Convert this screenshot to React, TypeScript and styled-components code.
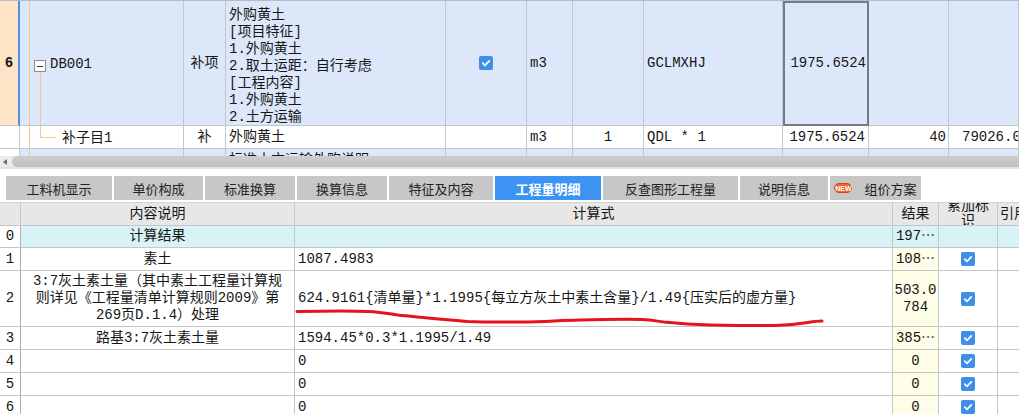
import React from "react";
import styled, { createGlobalStyle } from "styled-components";

const GlobalStyle = createGlobalStyle`
  *, *::before, *::after { box-sizing: border-box; }
  html, body { margin: 0; padding: 0; background: #fff; }
  body {
    font-family: "Liberation Mono", "Noto Sans CJK SC", monospace;
    font-size: 14px;
    color: #161616;
  }
`;

const ROW_BLUE = "#dce8fa";
const UP_LINE = "#c2c7cf";
const LOW_LINE = "#c6c6c6";
const TREE = "#f1c98e";

const Page = styled.div`
  position: relative;
  width: 1019px;
  height: 414px;
  overflow: hidden;
  display: flex;
  flex-direction: column;
`;

/* upper grid (list of items) */
const UpperGrid = styled.div`
  flex: none;
  display: grid;
  grid-template-columns: 20px 164px 42px 220px 81px 46px 71px 139px 86px 80px 70px;
  grid-template-rows: 125px 23px 23px;
  height: 156px;
  overflow: hidden;
  border-top: 1px solid #b6bcc6;
`;

const UCell = styled.div<{ $bg?: string; $align?: "start" | "center" | "end"; $top?: number; $padL?: number }>`
  display: flex;
  align-items: ${(p) => (p.$top !== undefined ? "flex-start" : "center")};
  justify-content: ${(p) =>
    p.$align === "center" ? "center" : p.$align === "end" ? "flex-end" : "flex-start"};
  padding: ${(p) => p.$top ?? 0}px 3px 0 ${(p) => p.$padL ?? 3}px;
  background: ${(p) => p.$bg ?? "#fff"};
  border-right: 1px solid ${UP_LINE};
  border-bottom: 1px solid ${UP_LINE};
  white-space: nowrap;
  overflow: hidden;
  line-height: 17px;
`;

const URowHead = styled(UCell)<{ $current?: boolean }>`
  justify-content: center;
  padding: 0;
  font-weight: ${(p) => (p.$current ? 700 : 400)};
  background: ${(p) => (p.$current ? "#fde4c7" : "#fff")};
  border-right: ${(p) => (p.$current ? "2px solid #4f94e0" : `1px solid ${UP_LINE}`)};
`;

const FocusCell = styled(UCell)`
  border: 2px solid #757b85;
  padding-right: 1px;
`;

const TreeCell = styled(UCell)`
  padding: 0;
  align-items: center;
`;

const Guide = styled.span`
  flex: none;
  align-self: stretch;
  width: 5px;
  margin-left: 9px;
  border-left: 1px solid ${TREE};
`;

const Toggle = styled.span`
  flex: none;
  align-self: stretch;
  width: 12px;
  display: flex;
  flex-direction: column;
  padding-top: 6px;
  &::before {
    content: "";
    flex: 1;
  }
`;

const MinusBox = styled.span`
  flex: none;
  width: 12px;
  height: 12px;
  border: 1px solid #8b9098;
  background: #fff;
  display: flex;
  align-items: center;
  justify-content: center;
  &::after {
    content: "";
    width: 6px;
    height: 1px;
    background: #333;
  }
`;

const Stem = styled.span`
  flex: 1;
  width: 1px;
  margin-left: 6px;
  background: ${TREE};
`;

const Elbow = styled.span`
  flex: none;
  align-self: flex-start;
  width: 16px;
  height: 12px;
  margin-left: 6px;
  border-left: 1px solid ${TREE};
  border-bottom: 1px solid ${TREE};
`;

const Code = styled.span<{ $gap: number }>`
  margin-left: ${(p) => p.$gap}px;
  padding-top: 3px;
`;

const Lines = styled.div`
  display: flex;
  flex-direction: column;
`;

/* check box */
const Box = styled.span`
  width: 14px;
  height: 14px;
  border-radius: 2px;
  background: #3f8fe8;
  display: inline-flex;
  align-items: center;
  justify-content: center;
  svg {
    display: block;
  }
`;

const Checked = () => (
  <Box>
    <svg width="10" height="10" viewBox="0 0 10 10">
      <path
        d="M1.8 5.2 L4 7.3 L8.3 2.8"
        fill="none"
        stroke="#fff"
        strokeWidth="1.7"
        strokeLinecap="round"
        strokeLinejoin="round"
      />
    </svg>
  </Box>
);

/* scroll bar */
const HScroll = styled.div`
  flex: none;
  height: 13px;
  display: flex;
  align-items: stretch;
  background: #ececec;
  border-bottom: 2px solid #e2e2e2;
`;

const LeftArrow = styled.span`
  align-self: center;
  margin-left: 3px;
  width: 0;
  height: 0;
  border-right: 4px solid #6a6a6a;
  border-top: 3px solid transparent;
  border-bottom: 3px solid transparent;
`;

const Thumb = styled.span`
  flex: 1;
  margin-left: 5px;
  border-radius: 5px 0 0 5px;
  background: linear-gradient(#cdcdcd, #c0c0c0);
`;

/* tabs */
const TabBar = styled.div`
  flex: none;
  display: flex;
  gap: 2px;
  height: 24px;
  margin-top: 7px;
  padding-left: 6px;
`;

const Tab = styled.div<{ $w: number; $active?: boolean }>`
  flex: none;
  width: ${(p) => p.$w}px;
  display: flex;
  align-items: center;
  justify-content: center;
  gap: 12px;
  font-family: "Noto Sans CJK SC", sans-serif;
  font-size: 13px;
  font-weight: ${(p) => (p.$active ? 700 : 400)};
  color: ${(p) => (p.$active ? "#fff" : "#222")};
  background: ${(p) => (p.$active ? "#3d93f3" : "#c7c7c7")};
`;

const NewBadge = styled.span`
  display: inline-flex;
  align-items: center;
  justify-content: center;
  width: 18px;
  height: 10px;
  border-radius: 5px;
  background: #f2652b;
  border: 1px solid #d4460f;
  color: #fff;
  font: 700 7px/1 "Liberation Sans", sans-serif;
`;

/* lower grid (quantity details) */
const LowerGrid = styled.div`
  flex: none;
  display: grid;
  grid-template-columns: 21px 274px 598px 46px 59px 60px;
  grid-template-rows: 23px 22px 23px 56px 23px 23px 23px 23px;
  margin-top: 2px;
  border-top: 1px solid #d4d4d4;
`;

const HeadCell = styled.div<{ $left?: boolean }>`
  display: flex;
  align-items: center;
  justify-content: ${(p) => (p.$left ? "flex-start" : "center")};
  text-align: ${(p) => (p.$left ? "left" : "center")};
  padding: ${(p) => (p.$left ? "0 0 0 2px" : "0 3px")};
  background: #e7e7e7;
  border-right: 1px solid ${LOW_LINE};
  border-bottom: 1px solid ${LOW_LINE};
  line-height: 15px;
  overflow: hidden;
`;

type Tone = "plain" | "total" | "result";
const toneBg: Record<Tone, string> = { plain: "#fff", total: "#d8f3f7", result: "#fdfde8" };

const Cell = styled.div<{ $tone?: Tone; $align?: "start" | "center" }>`
  display: flex;
  align-items: center;
  justify-content: ${(p) => (p.$align === "center" ? "center" : "flex-start")};
  text-align: ${(p) => (p.$align === "center" ? "center" : "left")};
  padding: 0 3px;
  background: ${(p) => toneBg[p.$tone ?? "plain"]};
  border-right: 1px solid ${LOW_LINE};
  border-bottom: 1px solid ${LOW_LINE};
  line-height: 17px;
  white-space: nowrap;
  overflow: hidden;
`;

const NumCell = styled(Cell)`
  justify-content: center;
  padding: 0;
  border-right-color: #b0b0b0;
`;

const ResultCell = styled(Cell)`
  padding: 0 1px;
  white-space: normal;
  word-break: break-all;
`;

const Scribble = styled.svg`
  position: absolute;
  left: 0;
  top: 0;
  pointer-events: none;
`;

const feature = [
  "外购黄土",
  "[项目特征]",
  "1.外购黄土",
  "2.取土运距：自行考虑",
  "[工程内容]",
  "1.外购黄土",
  "2.土方运输",
];

const tabs = [
  { label: "工料机显示", w: 106 },
  { label: "单价构成", w: 89 },
  { label: "标准换算", w: 90 },
  { label: "换算信息", w: 90 },
  { label: "特征及内容", w: 104 },
  { label: "工程量明细", w: 106, active: true },
  { label: "反查图形工程量", w: 135 },
  { label: "说明信息", w: 88 },
  { label: "组价方案", w: 91, badge: true },
];

type Detail = { no: number; desc: string[]; formula: string; result: string; total?: boolean };

const details: Detail[] = [
  { no: 0, desc: ["计算结果"], formula: "", result: "197⋯", total: true },
  { no: 1, desc: ["素土"], formula: "1087.4983", result: "108⋯" },
  {
    no: 2,
    desc: [
      "3:7灰土素土量（其中素土工程量计算规",
      "则详见《工程量清单计算规则2009》第",
      "269页D.1.4）处理",
    ],
    formula: "624.9161{清单量}*1.1995{每立方灰土中素土含量}/1.49{压实后的虚方量}",
    result: "503.0784",
  },
  { no: 3, desc: ["路基3:7灰土素土量"], formula: "1594.45*0.3*1.1995/1.49", result: "385⋯" },
  { no: 4, desc: [], formula: "0", result: "0" },
  { no: 5, desc: [], formula: "0", result: "0" },
  { no: 6, desc: [], formula: "0", result: "0" },
];

export default function App() {
  return (
    <Page>
      <GlobalStyle />

      <UpperGrid>
        {/* row 6 */}
        <URowHead $current>6</URowHead>
        <TreeCell $bg={ROW_BLUE}>
          <Guide />
          <Toggle>
            <MinusBox />
            <Stem />
          </Toggle>
          <Code $gap={4}>DB001</Code>
        </TreeCell>
        <UCell $bg={ROW_BLUE} $align="center">补项</UCell>
        <UCell $bg={ROW_BLUE} $top={6}>
          <Lines>
            {feature.map((l, i) => (
              <div key={i}>{l}</div>
            ))}
          </Lines>
        </UCell>
        <UCell $bg={ROW_BLUE} $align="center">
          <Checked />
        </UCell>
        <UCell $bg={ROW_BLUE}>m3</UCell>
        <UCell $bg={ROW_BLUE} />
        <UCell $bg={ROW_BLUE}>GCLMXHJ</UCell>
        <FocusCell $bg={ROW_BLUE} $align="end">1975.6524</FocusCell>
        <UCell $bg={ROW_BLUE} />
        <UCell $bg={ROW_BLUE} />

        {/* sub item */}
        <URowHead />
        <TreeCell>
          <Guide />
          <Elbow />
          <Code $gap={6}>补子目1</Code>
        </TreeCell>
        <UCell $align="center">补</UCell>
        <UCell>外购黄土</UCell>
        <UCell />
        <UCell>m3</UCell>
        <UCell $align="center">1</UCell>
        <UCell>QDL * 1</UCell>
        <UCell $align="end">1975.6524</UCell>
        <UCell $align="end" style={{ paddingRight: 2 }}>40</UCell>
        <UCell $padL={13}>79026.0960</UCell>

        {/* next row, cut by the scroll bar */}
        <URowHead />
        <TreeCell $bg={ROW_BLUE}>
          <Guide />
        </TreeCell>
        <UCell $bg={ROW_BLUE} />
        <UCell $bg={ROW_BLUE} $top={3}>标准土方运输外购说明</UCell>
        <UCell $bg={ROW_BLUE} />
        <UCell $bg={ROW_BLUE} />
        <UCell $bg={ROW_BLUE} />
        <UCell $bg={ROW_BLUE} />
        <UCell $bg={ROW_BLUE} />
        <UCell $bg={ROW_BLUE} />
        <UCell $bg={ROW_BLUE} />
      </UpperGrid>

      <HScroll>
        <LeftArrow />
        <Thumb />
      </HScroll>

      <TabBar>
        {tabs.map((t) => (
          <Tab key={t.label} $w={t.w} $active={t.active}>
            {t.badge && <NewBadge>NEW</NewBadge>}
            <span>{t.label}</span>
          </Tab>
        ))}
      </TabBar>

      <LowerGrid>
        <HeadCell />
        <HeadCell>内容说明</HeadCell>
        <HeadCell>计算式</HeadCell>
        <HeadCell>结果</HeadCell>
        <HeadCell>累加标识</HeadCell>
        <HeadCell $left>引用代码</HeadCell>

        {details.map((d) => {
          const tone: Tone = d.total ? "total" : "plain";
          return (
            <React.Fragment key={d.no}>
              <NumCell>{d.no}</NumCell>
              <Cell $tone={tone} $align="center">
                <Lines>
                  {d.desc.map((l) => (
                    <div key={l}>{l}</div>
                  ))}
                </Lines>
              </Cell>
              <Cell $tone={tone}>{d.formula}</Cell>
              <ResultCell $tone={d.total ? "total" : "result"} $align="center">
                {d.result}
              </ResultCell>
              <Cell $tone={tone} $align="center">
                {!d.total && <Checked />}
              </Cell>
              <Cell $tone={tone} />
            </React.Fragment>
          );
        })}
      </LowerGrid>

      <Scribble width="1019" height="414" viewBox="0 0 1019 414">
        <path
          d="M297 311.5 C320 311 350 310.5 368 311.5 C380 312 388 313.5 398 315 C415 317 440 319 468 321.5 C490 322.5 505 322 522 322 C545 321.5 560 320.5 580 320 C600 319.5 625 319 642 319.5 C652 320 656 321 664 322 C680 323.5 695 324.5 710 325 C735 325.5 755 325.8 775 325.5 C788 325 798 324 808 322.5 C814 321.5 818 321 822 321"
          fill="none"
          stroke="#e5131b"
          strokeWidth="3"
          strokeLinecap="round"
          strokeLinejoin="round"
        />
      </Scribble>
    </Page>
  );
}
